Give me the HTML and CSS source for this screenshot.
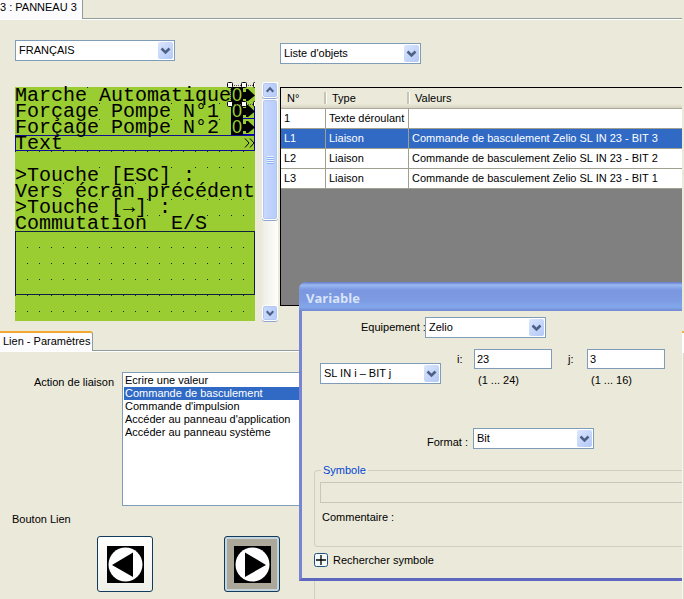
FILE: index.html
```html
<!DOCTYPE html>
<html lang="fr">
<head>
  <meta charset="UTF-8" />
  <meta name="viewport" content="width=device-width, initial-scale=1" />
  <title>Panneau 3</title>
  <link rel="stylesheet" href="styles.css">
</head>
<body>

<!-- Symboles réutilisés -->
<svg class="symbols" aria-hidden="true">
  <symbol id="chevron" viewBox="0 0 15 17">
    <path d="M3.5 6.5 7.5 10.5 11.5 6.5" fill="none" stroke="#4d6185" stroke-width="2.6" />
  </symbol>
  <symbol id="fleche" viewBox="0 0 12 16">
    <path d="M0 5H3V2H5L12 8.500L5 14H3V12H0Z" fill="#000" />
  </symbol>
</svg>

<div class="app">
  <div class="workspace">
    <nav class="tabs">
      <a class="tab" href="#panneau">3 : PANNEAU 3</a>
    </nav>

    <main class="panel" id="panneau">
      <section class="editor">
        <div class="combo language">
          <select aria-label="Langue"><option>FRANÇAIS</option></select>
          <span class="combo-arrow"><svg><use href="#chevron" /></svg></span>
        </div>

        <div class="screen-row">
          <div class="lcd">
            <p><span>Marche</span> <span>Automatique</span><b>0</b><svg><use href="#fleche" /></svg></p>
            <p class="link"><span>Forçage</span> <span>Pompe</span> <span>N°1</span> <b>0</b><svg><use href="#fleche" /></svg></p>
            <p class="link"><span>Forçage</span> <span>Pompe</span> <span>N°2</span> <b>0</b><svg><use href="#fleche" /></svg></p>
            <p class="scroll-text"><span>Text</span><svg viewBox="0 0 12 16"><path d="M2 3.500 6 8 2 12.500M7 3.500 11 8 7 12.500" fill="none" stroke="#000" /></svg></p>
            <p></p>
            <p><span>&gt;Touche</span> <span>[ESC]</span> <span>:</span></p>
            <p><span>Vers</span> <span>écran</span> <span>précédent</span></p>
            <p><span>&gt;Touche</span> <span>[→]</span> <span>:</span></p>
            <p><span>Commutation</span>  <span>E/S</span></p>
            <div class="zone"></div>

            <!-- Poignées de sélection -->
            <svg class="handles" viewBox="0 0 28 26">
              <path d="M3 3.500H28M3 22.500H28M3.500 3V22" fill="none" stroke="#555" stroke-dasharray="1 1" />
              <g fill="#fff" stroke="#000">
                <rect x=".5" y=".5" width="5" height="5" rx="1" />
                <rect x="14.500" y=".5" width="5" height="5" rx="1" />
                <rect x="26.500" y=".5" width="5" height="5" rx="1" />
                <rect x=".5" y="19.500" width="5" height="5" rx="1" />
                <rect x="14.500" y="19.500" width="5" height="5" rx="1" />
                <rect x="26.500" y="19.500" width="5" height="5" rx="1" />
              </g>
            </svg>
          </div>

          <div class="scrollbar">
            <button aria-label="Monter"><svg class="up"><use href="#chevron" /></svg></button>
            <div class="thumb"><i></i><i></i><i></i><i></i></div>
            <button class="down" aria-label="Descendre"><svg><use href="#chevron" /></svg></button>
          </div>
        </div>
      </section>

      <section class="objects">
        <div class="combo">
          <select aria-label="Affichage"><option>Liste d'objets</option></select>
          <span class="combo-arrow"><svg><use href="#chevron" /></svg></span>
        </div>

        <div class="grid">
          <table>
            <thead>
              <tr><th class="num">N°</th><th class="type">Type</th><th>Valeurs</th></tr>
            </thead>
            <tbody>
              <tr><td>1</td><td>Texte déroulant</td><td></td></tr>
              <tr class="selected"><td>L1</td><td>Liaison</td><td>Commande de basculement Zelio SL IN 23 - BIT 3</td></tr>
              <tr><td>L2</td><td>Liaison</td><td>Commande de basculement Zelio SL IN 23 - BIT 2</td></tr>
              <tr><td>L3</td><td>Liaison</td><td>Commande de basculement Zelio SL IN 23 - BIT 1</td></tr>
            </tbody>
          </table>
        </div>
      </section>
    </main>

    <nav class="tabs tabs-bottom">
      <a class="tab active" href="#lien">Lien - Paramètres</a>
    </nav>

    <section class="settings" id="lien">
      <div class="link-settings">
        <div class="action">
          <label for="action">Action de liaison</label>
          <select id="action" size="10">
            <option>Ecrire une valeur</option>
            <option selected>Commande de basculement</option>
            <option>Commande d'impulsion</option>
            <option>Accéder au panneau d'application</option>
            <option>Accéder au panneau système</option>
          </select>
        </div>
        <p class="link-title">Bouton Lien</p>
        <div class="link-buttons">
          <button aria-label="Flèche gauche">
            <svg viewBox="0 0 37 37"><rect width="37" height="37" /><circle cx="18.500" cy="18.500" r="17" fill="#fff" /><path d="M5 19 26 6.500V31Z" /></svg>
          </button>
          <button class="pressed" aria-label="Flèche droite">
            <svg viewBox="0 0 37 37"><rect width="37" height="37" /><circle cx="18.500" cy="18.500" r="17" fill="#fff" /><path d="M32 19 11 6.500V31Z" /></svg>
          </button>
        </div>
      </div>
      <div class="variable-group"></div>
    </section>
  </div>

  <aside class="side">
    <div class="side-tab"></div>
    <div class="side-panel"></div>
  </aside>

  <!-- Fenêtre Variable, au-dessus du panneau -->
  <form class="dialog">
    <h2>Variable</h2>
    <div class="dialog-body">
      <div class="field equipment">
        <label for="equipement">Equipement :</label>
        <div class="combo">
          <select id="equipement"><option>Zelio</option></select>
          <span class="combo-arrow"><svg><use href="#chevron" /></svg></span>
        </div>
      </div>

      <div class="address">
        <div class="combo">
          <select aria-label="Adresse"><option>SL IN i – BIT j</option></select>
          <span class="combo-arrow"><svg><use href="#chevron" /></svg></span>
        </div>
        <div class="index">
          <label for="i">i:</label>
          <input id="i" type="text" value="23">
          <small>(1 ... 24)</small>
        </div>
        <div class="index">
          <label for="j">j:</label>
          <input id="j" type="text" value="3">
          <small>(1 ... 16)</small>
        </div>
      </div>

      <div class="field format">
        <label for="format">Format :</label>
        <div class="combo">
          <select id="format"><option>Bit</option></select>
          <span class="combo-arrow"><svg><use href="#chevron" /></svg></span>
        </div>
      </div>

      <fieldset>
        <legend>Symbole</legend>
        <input type="text" aria-label="Symbole" disabled>
        <p>Commentaire :</p>
      </fieldset>

      <button type="button" class="search">
        <svg viewBox="0 0 14 14"><rect x=".5" y=".5" width="13" height="13" rx="2" fill="#f4f8fa" stroke="#1c5180" /><path d="M2 7H12M7 2V12" stroke="#000" stroke-width="1.300" /></svg>
        Rechercher symbole
      </button>
    </div>
  </form>
</div>

</body>
</html>
```

FILE: styles.css
```css
:root {
  --bg: #ebe9d9;
  --field: #7f9db9;
  --tab-line: #919b9c;
  --select: #316ac5;
  --lcd: #9acd32;
  --group: #d0d0bf;
}

* {
  box-sizing: border-box;
  margin: 0;
  padding: 0;
}

body {
  background: var(--bg);
  color: #000;
  font: 11px/13px "Liberation Sans", Arial, sans-serif;
}

select,
input,
button {
  font: inherit;
  color: inherit;
}

.symbols {
  display: none;
}

.app {
  position: relative;
  display: flex;
  min-height: 100vh;
  overflow: hidden;
}

.workspace {
  flex: 1;
  min-width: 0;
  display: flex;
  flex-direction: column;
}

/* Onglets */
.tabs {
  display: flex;
  height: 20px;
  border-bottom: 1px solid #fff;
  box-shadow: inset 0 -1px var(--tab-line);
}

.tab {
  padding: 1px 5px 0 0;
  background: #fcfcfe;
  border-right: 1px solid var(--tab-line);
  color: #000;
  text-decoration: none;
}

.tabs-bottom {
  height: 21px;
  margin-top: 10px;
}

.tab.active {
  padding: 2px 2px 0 3px;
  border-top: 2px solid #f0a830;
  border-top-right-radius: 3px;
}

/* Listes déroulantes */
.combo {
  position: relative;
  width: 121px;
  height: 21px;
}

.combo select {
  appearance: none;
  display: block;
  width: 100%;
  height: 100%;
  padding: 0 20px 0 3px;
  background: #fff;
  border: 1px solid var(--field);
  border-radius: 0;
}

.combo-arrow {
  position: absolute;
  top: 2px;
  right: 2px;
  width: 15px;
  height: 17px;
  border-radius: 2px;
  background: linear-gradient(135deg, #dbe6fe, #b3c8f7);
  pointer-events: none;
}

.combo-arrow svg {
  display: block;
  width: 15px;
  height: 17px;
}

/* Panneau principal */
.panel {
  display: flex;
  gap: 2px;
  padding-left: 15px;
}

.editor .language {
  width: 160px;
  margin-top: 20px;
}

.screen-row {
  display: flex;
  gap: 7px;
  margin-top: 21px;
}

/* Ecran : cellules de 12 x 16 avec un point par cellule */
.lcd {
  position: relative;
  isolation: isolate;
  width: 240px;
  height: 234px;
  margin-top: 5px;
  background:
    conic-gradient(from 0deg at 1px 1px, transparent 75%, #222 0) 0 0 / 12px 16px,
    var(--lcd);
  font: 20px/18px "Liberation Mono", monospace;
}

.lcd p {
  height: 16px;
  white-space: pre;
}

.lcd span,
.lcd b,
.lcd p svg {
  display: inline-block;
  height: 16px;
  vertical-align: top;
}

.lcd span {
  position: relative;
}

/* fond derrière tous les textes, pour ne pas couper les jambages */
.lcd span::before {
  content: "";
  position: absolute;
  inset: 0;
  z-index: -1;
  background: var(--lcd);
}

.lcd b {
  width: 12px;
  background: #000;
  color: var(--lcd);
  font: 18px/17px "Liberation Sans", sans-serif;
  text-align: center;
}

.lcd p svg {
  width: 12px;
  background: var(--lcd);
}

.lcd .link svg {
  box-shadow: inset -1px -1px #0000b0;
}

.lcd .scroll-text {
  display: flex;
  justify-content: space-between;
  background: var(--lcd);
  box-shadow: inset 0 0 0 1px #101090;
}

.lcd .scroll-text svg {
  background: none;
}

.lcd .zone {
  height: 64px;
  border: 1px solid #102040;
}

.lcd .handles {
  position: absolute;
  top: -5px;
  right: 0;
  width: 28px;
  height: 26px;
}

/* Barre de défilement */
.scrollbar {
  display: flex;
  flex-direction: column;
  width: 16px;
  background: linear-gradient(90deg, #eeede5, #fefefb);
}

.scrollbar button,
.thumb {
  border: 1px solid #fff;
  border-radius: 3px;
  background: linear-gradient(90deg, #cbdafd, #b5cbfb);
  box-shadow: inset 0 0 0 1px #b3c7ee, 0 1px #8ba6cf;
}

.scrollbar button {
  height: 16px;
}

.scrollbar svg {
  display: block;
  width: 14px;
  height: 14px;
}

.scrollbar .up {
  transform: rotate(180deg);
}

.thumb {
  display: flex;
  flex-direction: column;
  align-items: center;
  justify-content: center;
  gap: 1px;
  height: 121px;
  margin-top: 1px;
}

.thumb i {
  width: 7px;
  height: 1px;
  background: #eef4fe;
  box-shadow: 0 1px #8cb0f8;
}

.scrollbar .down {
  margin-top: auto;
}

/* Liste d'objets */
.objects {
  flex: 1;
  min-width: 0;
}

.objects .combo {
  width: 141px;
  margin-top: 23px;
}

.grid {
  height: 219px;
  margin-top: 23px;
  background: #808080;
  border: 1px solid #000;
  border-right: none;
}

table {
  width: 100%;
  table-layout: fixed;
  border-collapse: separate;
  border-spacing: 0;
}

th {
  position: relative;
  height: 21px;
  padding-left: 6px;
  background: linear-gradient(var(--bg) 16px, #d6d2c2);
  border-bottom: 1px solid #aca899;
  font-weight: normal;
  text-align: left;
}

th + th::before {
  content: "";
  position: absolute;
  left: -2px;
  top: 4px;
  width: 2px;
  height: 12px;
  background: #c7c5b2;
  border-right: 1px solid #fff;
}

.num {
  width: 45px;
}

.type {
  width: 83px;
}

td {
  height: 20px;
  padding-left: 3px;
  background: #fff;
  border-right: 1px solid #a0a090;
  border-bottom: 1px solid #a0a090;
  white-space: nowrap;
}

td:last-child {
  border-right: none;
}

.selected td {
  background: var(--select);
  color: #fff;
}

/* Paramètres du lien */
.settings {
  flex: 1;
  display: flex;
}

.link-settings {
  width: 314px;
  padding-top: 20px;
}

.action {
  display: flex;
}

.action label {
  width: 122px;
  padding: 4px 8px 0 0;
  text-align: right;
}

.action select {
  flex: 1;
  height: 134px;
  padding: 1px;
  background: #fff;
  border: 1px solid var(--field);
  border-radius: 0;
  overflow: hidden;
}

.action option {
  height: 13px;
  min-height: 13px;
  padding: 0 1px;
  line-height: 13px;
}

.action option:checked {
  background: linear-gradient(var(--select), var(--select));
  color: #fff;
}

.link-title {
  padding: 7px 0 10px 12px;
}

.link-buttons {
  display: flex;
  gap: 71px;
  padding-left: 97px;
}

.link-buttons button {
  display: grid;
  place-items: center;
  width: 56px;
  height: 56px;
  background: linear-gradient(#fff, #f0f0ea);
  border: 1px solid #123c5e;
  border-radius: 3px;
}

.link-buttons .pressed {
  background: #aca899;
  box-shadow: inset 0 0 0 2px #c5d5dd;
}

.link-buttons svg {
  width: 37px;
  height: 37px;
}

.variable-group {
  flex: 1;
  border-left: 1px solid var(--group);
}

/* Bord du panneau voisin */
.side {
  display: flex;
  flex-direction: column;
  width: 2px;
  padding-top: 331px;
}

.side-tab {
  height: 22px;
  background: #fff;
  border-top: 2px solid #f0b040;
}

.side-panel {
  flex: 1;
  background: #dcdacb;
  border-left: 1px solid #f6f5ee;
}

/* Fenêtre Variable */
.dialog {
  position: absolute;
  left: 299px;
  top: 282px;
  right: 2px;
  border: solid #7684d3;
  border-width: 0 0 3px 3px;
  border-bottom-color: #5f66bf;
  border-top-left-radius: 7px;
  background: var(--bg);
}

.dialog h2 {
  height: 29px;
  margin-left: -3px;
  padding-left: 7px;
  background: linear-gradient(#6679c6, #9ab8f2 3px, #7b97e0 8px, #7d9ae3 18px, #82a8ea 25px, #7288d2);
  border-top-left-radius: 7px;
  color: #d8e4f8;
  font: bold 13px/33px "Open Sans", "Liberation Sans", sans-serif;
}

.dialog-body {
  padding: 6px 0 11px 12px;
}

.field {
  display: flex;
}

.field label {
  padding-top: 4px;
  white-space: nowrap;
}

.equipment {
  padding-left: 47px;
}

.equipment label {
  width: 64px;
}

.address {
  display: flex;
  gap: 16px;
  margin-top: 11px;
  padding-left: 6px;
}

.address .combo {
  margin-top: 14px;
}

.index {
  display: grid;
  grid-template-columns: 17px 78px;
  row-gap: 5px;
  align-items: center;
}

.index + .index {
  grid-template-columns: 19px 78px;
}

.index input {
  width: 78px;
  height: 20px;
  padding: 0 2px;
  background: #fff;
  border: 1px solid var(--field);
}

.index small {
  grid-column: 2;
  padding-left: 4px;
  font-size: 11px;
}

.format {
  margin-top: 41px;
  padding-left: 113px;
}

.format label {
  width: 46px;
  padding-top: 8px;
}

fieldset {
  min-width: 0;
  margin-top: 15px;
  padding: 6px 0 22px 5px;
  border: 1px solid var(--group);
  border-right: none;
  border-radius: 4px 0 0 4px;
}

legend {
  margin-left: 1px;
  padding: 0 2px;
  color: #0046d5;
  line-height: 12px;
}

fieldset input {
  display: block;
  width: 100%;
  height: 21px;
  background: var(--bg);
  border: 1px solid #c9c7ba;
  border-right: none;
}

fieldset p {
  padding: 8px 0 0 2px;
}

.search {
  display: flex;
  align-items: center;
  gap: 5px;
  height: 14px;
  margin-top: 6px;
  background: none;
  border: none;
}

.search svg {
  width: 14px;
  height: 14px;
}
```
